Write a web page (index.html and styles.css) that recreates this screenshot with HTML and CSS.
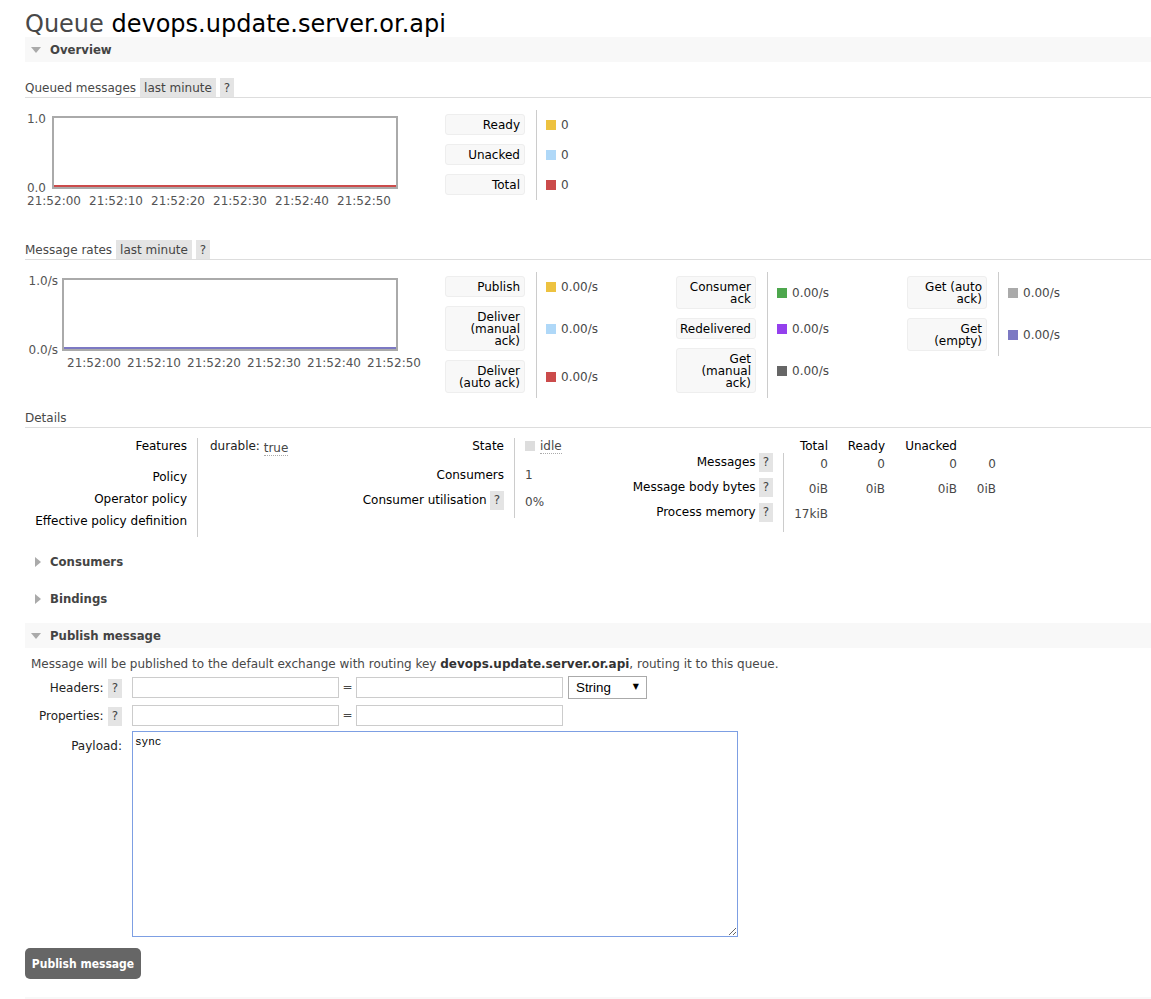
FILE: index.html
```html
<!DOCTYPE html>
<html>
<head>
<meta charset="utf-8">
<title>Queue devops.update.server.or.api</title>
<link rel="stylesheet" href="styles.css">
</head>
<body>
<div id="main">
  <h1>Queue <b>devops.update.server.or.api</b></h1>

  <div class="section">
    <h2 class="sec-head open first"><span class="tri-down"></span>Overview</h2>
    <div class="sec-body">
      <div class="subhead"><span>Queued messages</span><span class="pill">last minute</span><span class="pill">?</span></div>
      <div class="chart-row">
        <div class="chart c1">
          <div class="chart-top">
            <div class="ylabels"><span>1.0</span><span>0.0</span></div>
            <div class="plot"><div class="line" style="background:#cb4b4b"></div></div>
          </div>
          <div class="xlabels"><span>21:52:00</span><span>21:52:10</span><span>21:52:20</span><span>21:52:30</span><span>21:52:40</span><span>21:52:50</span></div>
        </div>
        <div class="legends">
          <div class="legend">
            <div class="lg-th"><div class="lg-label">Ready</div></div>
            <div class="lg-td"><span class="sw" style="background:#edc240"></span>0</div>
            <div class="lg-th"><div class="lg-label">Unacked</div></div>
            <div class="lg-td"><span class="sw" style="background:#afd8f8"></span>0</div>
            <div class="lg-th"><div class="lg-label">Total</div></div>
            <div class="lg-td"><span class="sw" style="background:#cb4b4b"></span>0</div>
          </div>
        </div>
      </div>

      <div class="subhead"><span>Message rates</span><span class="pill">last minute</span><span class="pill">?</span></div>
      <div class="chart-row">
        <div class="chart c2">
          <div class="chart-top">
            <div class="ylabels"><span>1.0/s</span><span>0.0/s</span></div>
            <div class="plot"><div class="line" style="background:#7c79c3"></div></div>
          </div>
          <div class="xlabels"><span>21:52:00</span><span>21:52:10</span><span>21:52:20</span><span>21:52:30</span><span>21:52:40</span><span>21:52:50</span></div>
        </div>
        <div class="legends">
          <div class="legend">
            <div class="lg-th"><div class="lg-label">Publish</div></div>
            <div class="lg-td"><span class="sw" style="background:#edc240"></span>0.00/s</div>
            <div class="lg-th"><div class="lg-label">Deliver<br>(manual<br>ack)</div></div>
            <div class="lg-td"><span class="sw" style="background:#afd8f8"></span>0.00/s</div>
            <div class="lg-th"><div class="lg-label">Deliver<br>(auto ack)</div></div>
            <div class="lg-td"><span class="sw" style="background:#cb4b4b"></span>0.00/s</div>
          </div>
          <div class="legend">
            <div class="lg-th"><div class="lg-label">Consumer<br>ack</div></div>
            <div class="lg-td"><span class="sw" style="background:#4da74d"></span>0.00/s</div>
            <div class="lg-th"><div class="lg-label">Redelivered</div></div>
            <div class="lg-td"><span class="sw" style="background:#9440ed"></span>0.00/s</div>
            <div class="lg-th"><div class="lg-label">Get<br>(manual<br>ack)</div></div>
            <div class="lg-td"><span class="sw" style="background:#666666"></span>0.00/s</div>
          </div>
          <div class="legend">
            <div class="lg-th"><div class="lg-label">Get (auto<br>ack)</div></div>
            <div class="lg-td"><span class="sw" style="background:#aaaaaa"></span>0.00/s</div>
            <div class="lg-th"><div class="lg-label">Get<br>(empty)</div></div>
            <div class="lg-td"><span class="sw" style="background:#7c79c3"></span>0.00/s</div>
          </div>
        </div>
      </div>

      <div class="subhead"><span>Details</span></div>
      <div class="details">
        <div class="facts t1">
          <div class="fth">Features</div>
          <div class="ftd"><span class="key">durable:</span> <span class="dot low">true</span></div>
          <div class="fth">Policy</div>
          <div class="ftd"></div>
          <div class="fth">Operator policy</div>
          <div class="ftd"></div>
          <div class="fth">Effective policy definition</div>
          <div class="ftd"></div>
        </div>
        <div class="facts t2">
          <div class="fth">State</div>
          <div class="ftd"><span class="idle-sq"></span><span class="dot">idle</span></div>
          <div class="fth">Consumers</div>
          <div class="ftd">1</div>
          <div class="fth fth-help util"><span>Consumer utilisation</span><span class="pill">?</span></div>
          <div class="ftd low2">0%</div>
        </div>
        <div class="facts t3">
          <div class="hcell"></div>
          <div class="hcell r">Total</div>
          <div class="hcell r">Ready</div>
          <div class="hcell r">Unacked</div>
          <div class="hcell"></div>

          <div class="fth fth-help"><span>Messages</span><span class="pill">?</span></div>
          <div class="vcell">0</div><div class="vcell">0</div><div class="vcell">0</div><div class="vcell">0</div>

          <div class="fth fth-help"><span>Message body bytes</span><span class="pill">?</span></div>
          <div class="vcell">0iB</div><div class="vcell">0iB</div><div class="vcell">0iB</div><div class="vcell">0iB</div>

          <div class="fth fth-help"><span>Process memory</span><span class="pill">?</span></div>
          <div class="vcell">17kiB</div><div class="vcell"></div><div class="vcell"></div><div class="vcell"></div>
        </div>
      </div>
    </div>
  </div>

  <div class="section">
    <h2 class="sec-head"><span class="tri-right"></span>Consumers</h2>
  </div>
  <div class="section">
    <h2 class="sec-head"><span class="tri-right"></span>Bindings</h2>
  </div>

  <div class="section">
    <h2 class="sec-head open"><span class="tri-down"></span>Publish message</h2>
    <div class="sec-body-pub">
      <p class="pub-text">Message will be published to the default exchange with routing key <b>devops.update.server.or.api</b>, routing it to this queue.</p>
      <div class="frow">
        <div class="flabel"><span>Headers:</span><span class="pill">?</span></div>
        <input class="inp" type="text"><span class="eq">=</span><input class="inp" type="text">
        <span class="sel-wrap"><select class="sel"><option>String</option></select><span class="sel-arrow">▼</span></span>
      </div>
      <div class="frow">
        <div class="flabel"><span>Properties:</span><span class="pill">?</span></div>
        <input class="inp" type="text"><span class="eq">=</span><input class="inp" type="text">
      </div>
      <div class="frow ta-row">
        <div class="flabel ta-label"><span>Payload:</span></div>
        <textarea class="payload">sync</textarea>
      </div>
      <button class="btn" type="button">Publish message</button>
    </div>
  </div>

  <div class="section">
    <div class="sec-head open last"></div>
  </div>
</div>
</body>
</html>
```
FILE: styles.css
```css
* { box-sizing: border-box; }
html, body { margin: 0; padding: 0; background: #fff; }
body {
  font-family: "DejaVu Sans", Verdana, sans-serif;
  font-size: 12px;
  line-height: 14px;
  color: #484848;
  overflow: hidden;
}
#main { padding-left: 25px; }

h1 {
  margin: 11px 0 0;
  font-size: 24px;
  line-height: 26px;
  font-weight: normal;
  color: #484848;
  white-space: nowrap;
}
h1 b { font-weight: normal; color: #000; }

.sec-head {
  margin: 12px 0 0;
  height: 25px;
  padding-left: 6px;
  display: flex;
  align-items: center;
  font-family: "DejaVu Sans Condensed", "DejaVu Sans", sans-serif;
  font-stretch: condensed;
  font-weight: bold;
  font-size: 13px;
  color: #444;
}
.sec-head.open { background: #f8f8f8; }
.sec-head.first { margin-top: 0; }
.sec-head.last { margin-top: 18px; }

.tri-down {
  width: 0; height: 0;
  border-left: 5px solid transparent;
  border-right: 5px solid transparent;
  border-top: 6px solid #aaa;
  margin-right: 9px;
}
.tri-right {
  width: 0; height: 0;
  border-top: 5px solid transparent;
  border-bottom: 5px solid transparent;
  border-left: 6px solid #aaa;
  margin-left: 4px;
  margin-right: 9px;
}

.sec-body { padding-top: 16px; }

.subhead {
  display: flex;
  gap: 4px;
  height: 20px;
  line-height: 21px;
  border-bottom: 1px solid #ddd;
}
.pill {
  background: #e4e4e4;
  padding: 0 4px;
  color: #444;
  line-height: 19px;
  height: 19px;
}
.subhead .pill { line-height: 21px; }

.chart-row {
  display: flex;
  align-items: flex-start;
  margin: 12px 0 10px;
  min-height: 120px;
}
.chart { width: 420px; flex: none; padding-top: 6px; }
.chart-top { display: flex; }
.ylabels {
  display: flex;
  flex-direction: column;
  justify-content: space-between;
  text-align: right;
  margin: -4px 0 -6px;
  color: #545454;
}
.c1 .ylabels { width: 27px; padding-right: 6px; }
.c2 .ylabels { width: 37px; padding-right: 4px; }
.plot {
  height: 73px;
  border: 2px solid #aaa;
  display: flex;
  align-items: flex-end;
}
.c1 .plot { width: 346px; }
.c2 .plot { width: 336px; }
.line { width: 100%; height: 2px; }
.xlabels {
  display: flex;
  margin-top: 5px;
  color: #545454;
  white-space: nowrap;
}
.xlabels span { flex: none; text-align: center; }
.c1 .xlabels { margin-left: -2px; }
.c1 .xlabels span { width: 62px; }
.c2 .xlabels { margin-left: 39px; }
.c2 .xlabels span { width: 60px; }

.legends { display: flex; align-items: flex-start; }
.legend {
  display: grid;
  grid-template-columns: 92px 139px;
}
.lg-th {
  padding: 4px 11px 5px 0;
  border-right: 1px solid #ccc;
}
.lg-label {
  width: 80px;
  background: #f8f8f8;
  border: 1px solid #eee;
  border-radius: 3px;
  padding: 4px 4px 3px 2px;
  text-align: right;
  line-height: 12px;
  color: #000;
  white-space: nowrap;
}
.lg-td {
  display: flex;
  align-items: center;
  padding-left: 9px;
}
.sw { width: 10px; height: 10px; margin-right: 5px; flex: none; }

.details {
  display: flex;
  align-items: flex-start;
  margin-top: 10px;
}
.facts { display: grid; }
.t1 {
  grid-template-columns: 173px 142px;
  grid-template-rows: 31px 22px 22px 24px;
}
.t2 {
  grid-template-columns: 175px 85px;
  grid-template-rows: 29px 22px 29px;
}
.t3 {
  grid-template-columns: 184px 44px 57px 72px 39px;
  grid-template-rows: 15px 25px 25px 29px;
}
.fth {
  text-align: right;
  padding-right: 10px;
  padding-top: 1px;
  border-right: 1px solid #ccc;
  color: #000;
  white-space: nowrap;
}
.ftd { padding-left: 12px; padding-top: 1px; white-space: nowrap; }
.t2 .ftd { padding-left: 10px; }
.fth-help {
  display: flex;
  justify-content: flex-end;
  align-items: flex-start;
  gap: 3px;
  line-height: 19px;
  padding-top: 0;
}
.fth-help.util { padding-top: 2px; }
.key { color: #222; }
.dot { border-bottom: 1px dotted #aaa; }
.low { position: relative; top: 2px; }
.low2 { padding-top: 4px; line-height: 19px; }
.idle-sq {
  display: inline-block;
  width: 10px; height: 10px;
  background: #ddd;
  margin: 0 5px 0 0;
  vertical-align: -1px;
}
.hcell { color: #000; padding-top: 1px; }
.r { text-align: right; }
.vcell { text-align: right; padding-top: 4px; }

.pub-text { margin: 9px 0 2px 6px; line-height: 14px; }
.pub-text b { color: #333; }
.frow {
  display: flex;
  align-items: center;
  height: 28px;
}
.flabel {
  width: 97px;
  margin-right: 10px;
  flex: none;
  display: flex;
  justify-content: flex-end;
  align-items: center;
  gap: 4px;
  color: #222;
  line-height: 19px;
  padding-top: 2px;
}
.inp {
  width: 207px;
  height: 21px;
  border: 1px solid #ccc;
  margin: 0;
  padding: 1px 3px;
  font: 12px "DejaVu Sans", sans-serif;
}
.eq { width: 17px; text-align: center; }
.sel-wrap { position: relative; margin-left: 5px; display: inline-block; height: 23px; }
.sel {
  -webkit-appearance: none;
  appearance: none;
  width: 79px;
  height: 23px;
  border: 1px solid #aaa;
  background: #fff;
  margin: 0;
  padding: 0 0 0 7px;
  font: 13.33px "Liberation Sans", Arial, sans-serif;
  color: #000;
  border-radius: 0;
}
.sel-arrow {
  position: absolute;
  right: 8px;
  top: 6px;
  font-size: 8px;
  line-height: 10px;
  color: #000;
  pointer-events: none;
}
.ta-row { height: auto; align-items: flex-start; margin-top: 2px; }
.ta-label { padding-top: 6px; }
.payload {
  width: 606px;
  height: 206px;
  margin: 0;
  border: 1px solid #7d9fe3;
  padding: 3px 2px 2px;
  font: 11px/14px "Liberation Mono", "Courier New", monospace;
  color: #000;
  resize: both;
  outline: none;
}
.btn {
  display: block;
  margin-top: 11px;
  width: 116px;
  height: 31px;
  border: none;
  border-radius: 5px;
  background: #666;
  color: #fff;
  font-family: "DejaVu Sans Condensed", "DejaVu Sans", sans-serif;
  font-stretch: condensed;
  font-weight: bold;
  font-size: 12px;
  padding: 0;
}
```
